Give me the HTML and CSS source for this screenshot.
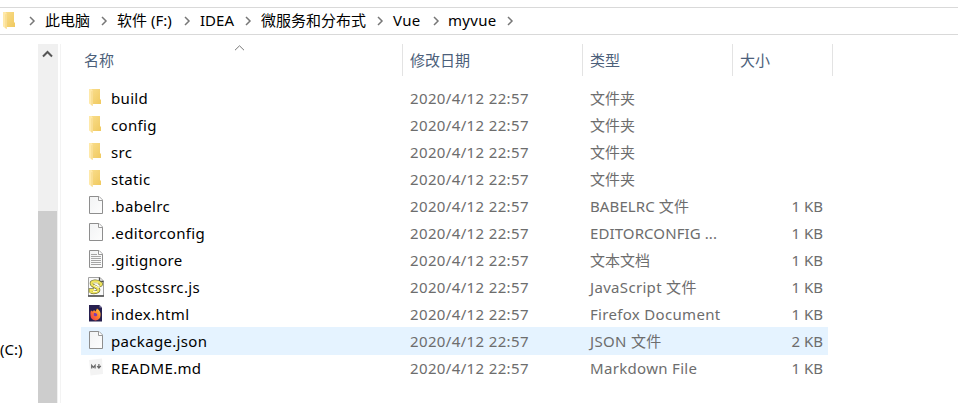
FILE: index.html
```html
<!DOCTYPE html>
<html lang="zh-CN">
<head>
<meta charset="utf-8">
<title>myvue</title>
<link rel="stylesheet" href="styles.css">
</head>
<body>
<svg class="defs" width="0" height="0">
  <defs>
    <linearGradient id="gold" x1="0" y1="0" x2="1" y2="1"><stop offset="0" stop-color="#f9dd8b"/><stop offset="1" stop-color="#f0c95f"/></linearGradient>
    <linearGradient id="sheet" x1="0" y1="0" x2="1" y2="1"><stop offset="0" stop-color="#f2f3f4"/><stop offset="1" stop-color="#fdfdfd"/></linearGradient>
    <linearGradient id="flame" x1="1" y1="0" x2="0" y2="1"><stop offset="0" stop-color="#ffd43c"/><stop offset=".5" stop-color="#ff7a2c"/><stop offset="1" stop-color="#ee3155"/></linearGradient>
  </defs>
  <symbol id="folder" viewBox="0 0 18 20">
    <path d="M4 1h9v10l1 1V16H4z" fill="url(#gold)"/>
    <path d="M2 1h2.500l1.200 1.500V18L2 15.500z" fill="#ffe9a9"/>
    <path d="M4.200 3.500 5.700 2.500V18l-1.500-1z" fill="#f8dc91"/>
  </symbol>
  <symbol id="page" viewBox="0 0 18 20">
    <path d="M2.500.500h9.500l3.500 3.500v13.500h-13z" fill="url(#sheet)" stroke="#8e8e8e"/>
    <path d="M11.500.500v4h4" fill="#fff" stroke="#999"/>
  </symbol>
  <symbol id="lines" viewBox="0 0 18 20">
    <use href="#page"/>
    <path d="M4 4.500h6M4 6.500h10M4 8.500h10M4 10.500h10M4 12.500h10M4 14.500h10" stroke="#a5a5a5"/>
  </symbol>
  <symbol id="script" viewBox="0 0 18 20">
    <path d="M1.500.5H13l3.500 3.500v15h-15z" fill="#fafafa" stroke="#a2a2a2"/>
    <path d="M12.500.5v4h4M1 19h16" fill="none" stroke="#4a4a4a" stroke-width="1.300"/>
    <path d="M12.500 5.500C10 3.700 4.500 4 4.500 6.500c0 3 6.500 3 7 6 .3 2.500-4 3.500-7.500 2.500M11 6c4-1 4 2 1.500 2.500M7 13H3.500v2.500" fill="none" stroke="#77763f" stroke-width="3.600"/>
    <path d="M12.500 5.500C10 3.700 4.500 4 4.500 6.500c0 3 6.500 3 7 6 .3 2.500-4 3.500-7.500 2.500M11 6c4-1 4 2 1.500 2.500M7 13H3.500v2.500" fill="none" stroke="#efe45c" stroke-width="2.200"/>
    <path d="M6 6h5M7 8.500l5 2M6 14.500h4" stroke="#fffbd0"/>
  </symbol>
  <symbol id="fox" viewBox="0 0 18 20">
    <path d="M2 1h10.500L15 3.500V17.500H2z" fill="#27204f"/>
    <path d="M12.500 1v2.500H15z" fill="#8780a8"/>
    <path d="M4 6.500l1.800 1L7 6l1.500 1.500L10 4.500c3 2 4 4.500 3.500 7a5 5 0 0 1-10 0C3.300 9.500 3.300 8 4 6.500z" fill="url(#flame)"/>
    <path d="M6.800 9.200c1.700-.8 3.200.2 3.500 1.800-.4 1.600-2.600 1.800-3.500.6z" fill="#7c3bb5"/>
  </symbol>
  <symbol id="mark" viewBox="0 0 18 20">
    <path d="M2 2 15 .5l1 15.500L3.500 17.500z" fill="#f3f3f3"/>
    <path d="M4.700 10.500V7.300l1.700 2 1.700-2v3.200M11.900 6v4M10.200 8.100l1.700 1.900 1.900-2.200" fill="none" stroke="#666" stroke-width="1.200"/>
  </symbol>
  <symbol id="chev" viewBox="0 0 7 10"><path d="M1 1l4 4-4 4" fill="none" stroke="#777" stroke-width="1.500"/></symbol>
</svg>

<nav class="address">
  <svg class="root-icon" width="18" height="20"><use href="#folder"/></svg>
  <svg class="chev" width="7" height="10"><use href="#chev"/></svg><span>此电脑</span>
  <svg class="chev" width="7" height="10"><use href="#chev"/></svg><span class="drive">软件 (F:)</span>
  <svg class="chev" width="7" height="10"><use href="#chev"/></svg><span class="idea">IDEA</span>
  <svg class="chev" width="7" height="10"><use href="#chev"/></svg><span>微服务和分布式</span>
  <svg class="chev" width="7" height="10"><use href="#chev"/></svg><span class="latin">Vue</span>
  <svg class="chev" width="7" height="10"><use href="#chev"/></svg><span class="latin">myvue</span>
  <svg class="chev" width="7" height="10"><use href="#chev"/></svg>
</nav>

<div class="body">
  <aside class="tree"><span>(C:)</span></aside>
  <div class="scroll">
    <svg class="up" width="11" height="8" viewBox="0 0 11 8"><path d="M1 6.500 5.500 2 10 6.500" fill="none" stroke="#555" stroke-width="2"/></svg>
    <div class="thumb"></div>
  </div>
  <main class="files">
    <header class="heads">
      <div class="head">名称<svg class="sort" width="11" height="6" viewBox="0 0 11 6"><path d="M1 5.200 5.500.8 10 5.200" fill="none" stroke="#777"/></svg></div>
      <div class="head">修改日期</div>
      <div class="head">类型</div>
      <div class="head">大小</div>
    </header>
    <div class="row"><svg width="18" height="20"><use href="#folder"/></svg><span class="name">build</span><span class="date">2020/4/12 22:57</span><span class="type">文件夹</span><span class="size"></span></div>
    <div class="row"><svg width="18" height="20"><use href="#folder"/></svg><span class="name">config</span><span class="date">2020/4/12 22:57</span><span class="type">文件夹</span><span class="size"></span></div>
    <div class="row"><svg width="18" height="20"><use href="#folder"/></svg><span class="name">src</span><span class="date">2020/4/12 22:57</span><span class="type">文件夹</span><span class="size"></span></div>
    <div class="row"><svg width="18" height="20"><use href="#folder"/></svg><span class="name">static</span><span class="date">2020/4/12 22:57</span><span class="type">文件夹</span><span class="size"></span></div>
    <div class="row"><svg width="18" height="20"><use href="#page"/></svg><span class="name">.babelrc</span><span class="date">2020/4/12 22:57</span><span class="type snug">BABELRC 文件</span><span class="size">1 KB</span></div>
    <div class="row"><svg width="18" height="20"><use href="#page"/></svg><span class="name">.editorconfig</span><span class="date">2020/4/12 22:57</span><span class="type snug">EDITORCONFIG ...</span><span class="size">1 KB</span></div>
    <div class="row"><svg width="18" height="20"><use href="#lines"/></svg><span class="name">.gitignore</span><span class="date">2020/4/12 22:57</span><span class="type">文本文档</span><span class="size">1 KB</span></div>
    <div class="row"><svg width="18" height="20"><use href="#script"/></svg><span class="name">.postcssrc.js</span><span class="date">2020/4/12 22:57</span><span class="type wide">JavaScript 文件</span><span class="size">1 KB</span></div>
    <div class="row"><svg width="18" height="20"><use href="#fox"/></svg><span class="name">index.html</span><span class="date">2020/4/12 22:57</span><span class="type wide">Firefox Document</span><span class="size">1 KB</span></div>
    <div class="row hover"><svg width="18" height="20"><use href="#page"/></svg><span class="name">package.json</span><span class="date">2020/4/12 22:57</span><span class="type wide">JSON 文件</span><span class="size">2 KB</span></div>
    <div class="row"><svg width="18" height="20"><use href="#mark"/></svg><span class="name">README.md</span><span class="date">2020/4/12 22:57</span><span class="type wide">Markdown File</span><span class="size">1 KB</span></div>
  </main>
</div>
</body>
</html>
```
FILE: styles.css
```css
* { box-sizing: border-box; }
body {
  margin: 0;
  height: 403px;
  overflow: hidden;
  background: #fff;
  color: #000;
  font: 15px/28px "Noto Sans", "Noto Sans CJK SC", sans-serif;
  white-space: nowrap;
}
.defs { position: absolute; }
.address {
  margin-top: 7px;
  height: 28px;
  border-top: 1px solid #d9d9d9;
  border-bottom: 1px solid #d9d9d9;
  display: grid;
  grid-template-columns: 29px 16px 56px 16px 67px 16px 45px 16px 116px 16px 40px 15px 59px 16px;
  align-items: center;
  line-height: 24px;
}
.address span { margin-top: -2px; }
.address .chev { margin-top: -1px; }
.root-icon { margin-left: 1px; }
.latin { letter-spacing: .3px; }
.body { display: flex; height: 368px; }
.tree { width: 38px; padding-top: 300px; }
.scroll {
  width: 20px;
  margin-top: 9px;
  background: #f0f0f0;
  display: flex;
  flex-direction: column;
}
.up { margin: 6px 0 0 4px; }
.thumb { width: 19px; margin-top: 153px; flex: 1; background: #cdcdcd; }
.files { flex: 1; margin-left: 2px; margin-top: 9px; border-left: 1px solid #f3f3f3; padding-left: 20px; }
.heads { display: grid; grid-template-columns: 322px 180px 150px 100px; height: 32px; margin-bottom: 8px; line-height: 32px; color: #4c607a; }
.head { height: 32px; border-right: 1px solid #e3e3e3; padding-left: 7px; position: relative; }
.head:first-child { padding-left: 3px; }
.sort { position: absolute; left: 153px; top: 1px; }
.row {
  width: 747px;
  height: 28px;
  margin-bottom: -1px;
  padding-left: 6px;
  display: grid;
  grid-template-columns: 24px 299px 180px 150px 83px;
  align-items: center;
  color: #6d6d6d;
}
.row svg { margin-top: 0; }
.hover { background: #e5f3ff; }
.name { color: #000; letter-spacing: .33px; }
.date { letter-spacing: .36px; }
.wide { letter-spacing: .32px; }
.snug { letter-spacing: .1px; }
.size { text-align: right; }
```
